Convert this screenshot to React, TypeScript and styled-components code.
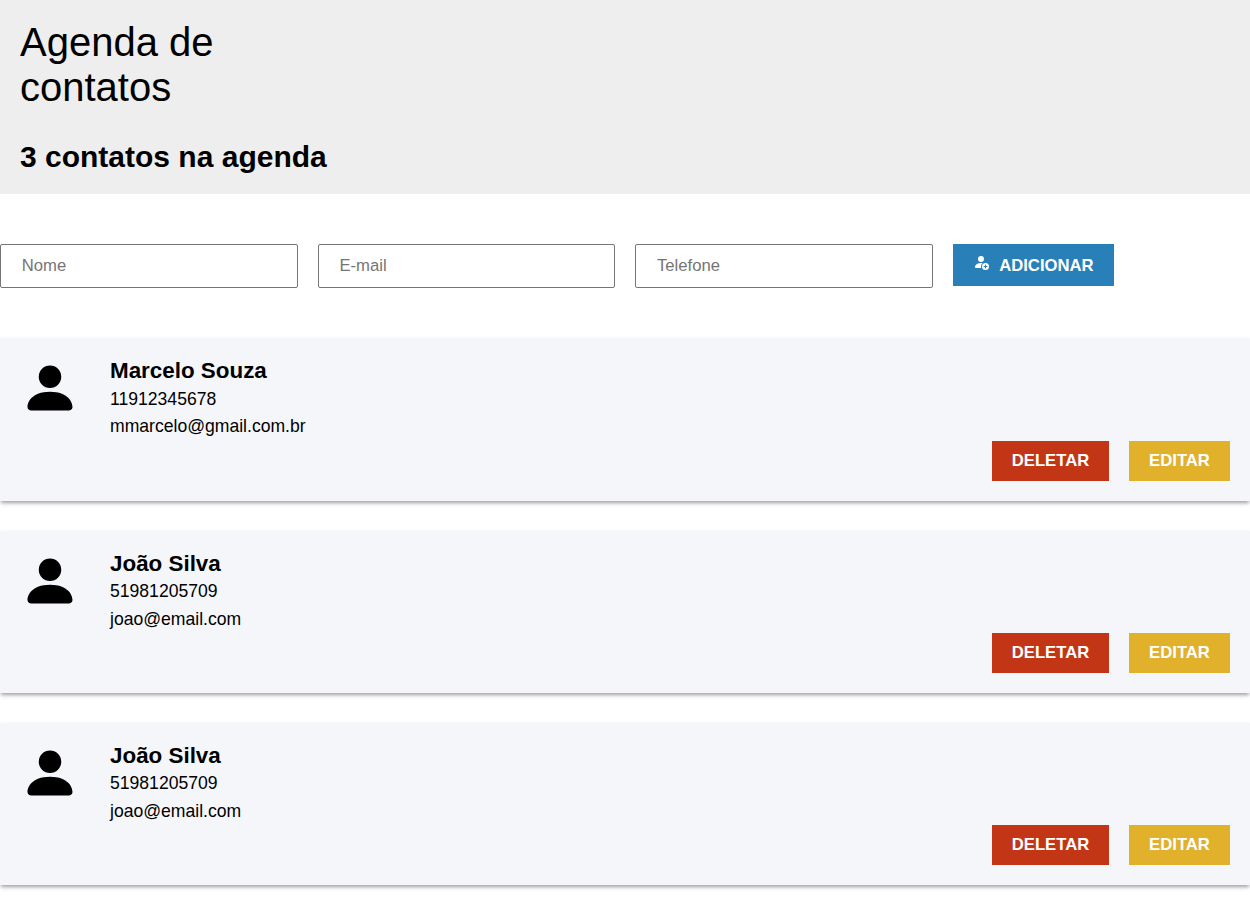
import React from 'react';
import styled, { createGlobalStyle } from 'styled-components';
import { BsPersonFill, BsPersonFillAdd } from 'react-icons/bs';

const GlobalStyle = createGlobalStyle`
  * {
    margin: 0;
    padding: 0;
    box-sizing: border-box;
    font-family: 'Liberation Sans', Arial, sans-serif;
  }
  body {
    background: #fff;
    color: #000;
  }
`;

const Header = styled.header`
  display: flex;
  flex-direction: column;
  height: 194px;
  padding: 20px;
  background: #eee;
`;

const Title = styled.h1`
  width: 240px;
  font-size: 40px;
  font-weight: 400;
  line-height: 45px;
`;

const Counter = styled.h2`
  margin-top: 30px;
  font-size: 30px;
  font-weight: 700;
  line-height: 34px;
`;

const Form = styled.form`
  display: flex;
  align-items: flex-start;
  gap: 20px;
  margin: 50px 0 50.4px;
`;

const Field = styled.input`
  width: 297.6px;
  height: 44px;
  padding: 0 20.8px;
  border: 1px solid #767676;
  border-radius: 2px;
  background: #fff;
  font-size: 16.67px;
  &::placeholder {
    color: #757575;
  }
`;

const Button = styled.button<{ $color: string; $width: number }>`
  display: flex;
  align-items: center;
  justify-content: center;
  width: ${({ $width }) => $width}px;
  height: 40px;
  border: none;
  background: ${({ $color }) => $color};
  color: #fff;
  font-size: 16.67px;
  font-weight: 700;
  text-transform: uppercase;
`;

const AddButton = styled(Button)`
  justify-content: flex-start;
  height: 42px;
  padding: 2px 0 0 20px;
`;

const AddIcon = styled(BsPersonFillAdd)`
  flex: none;
  width: 16px;
  height: 16px;
  margin: 0 10.4px 8px 0;
`;

const List = styled.ul`
  display: flex;
  flex-direction: column;
  gap: 30px;
  padding-bottom: 30px;
  list-style: none;
`;

const Card = styled.li`
  display: flex;
  height: 162.2px;
  padding: 20px;
  background: #f5f6fa;
  box-shadow:
    0 3px 4px -1px rgba(0, 0, 0, 0.34),
    0 1px 4px 0 rgba(0, 0, 0, 0.08);
`;

const Avatar = styled(BsPersonFill)`
  flex: none;
  width: 60px;
  height: 60px;
  margin-right: 30px;
`;

const Details = styled.div`
  flex: 1;
`;

const Name = styled.h3`
  margin-bottom: 1.2px;
  font-size: 22.4px;
  line-height: 26.2px;
`;

const Line = styled.p`
  font-size: 17.58px;
  line-height: 27.6px;
`;

const Actions = styled.div`
  display: flex;
  align-self: flex-end;
  gap: 20px;
`;

const contacts = [
  { id: 1, name: 'Marcelo Souza', phone: '11912345678', email: 'mmarcelo@gmail.com.br' },
  { id: 2, name: 'João Silva', phone: '51981205709', email: 'joao@email.com' },
  { id: 3, name: 'João Silva', phone: '51981205709', email: 'joao@email.com' },
];

export default function App() {
  return (
    <>
      <GlobalStyle />
      <Header>
        <Title>Agenda de contatos</Title>
        <Counter>{contacts.length} contatos na agenda</Counter>
      </Header>
      <Form>
        <Field placeholder="Nome" />
        <Field placeholder="E-mail" />
        <Field placeholder="Telefone" />
        <AddButton type="button" $color="#2980b9" $width={161}>
          <AddIcon />
          Adicionar
        </AddButton>
      </Form>
      <List>
        {contacts.map(({ id, name, phone, email }) => (
          <Card key={id}>
            <Avatar />
            <Details>
              <Name>{name}</Name>
              <Line>{phone}</Line>
              <Line>{email}</Line>
            </Details>
            <Actions>
              <Button type="button" $color="#c23616" $width={117}>Deletar</Button>
              <Button type="button" $color="#e1b12c" $width={101}>Editar</Button>
            </Actions>
          </Card>
        ))}
      </List>
    </>
  );
}
